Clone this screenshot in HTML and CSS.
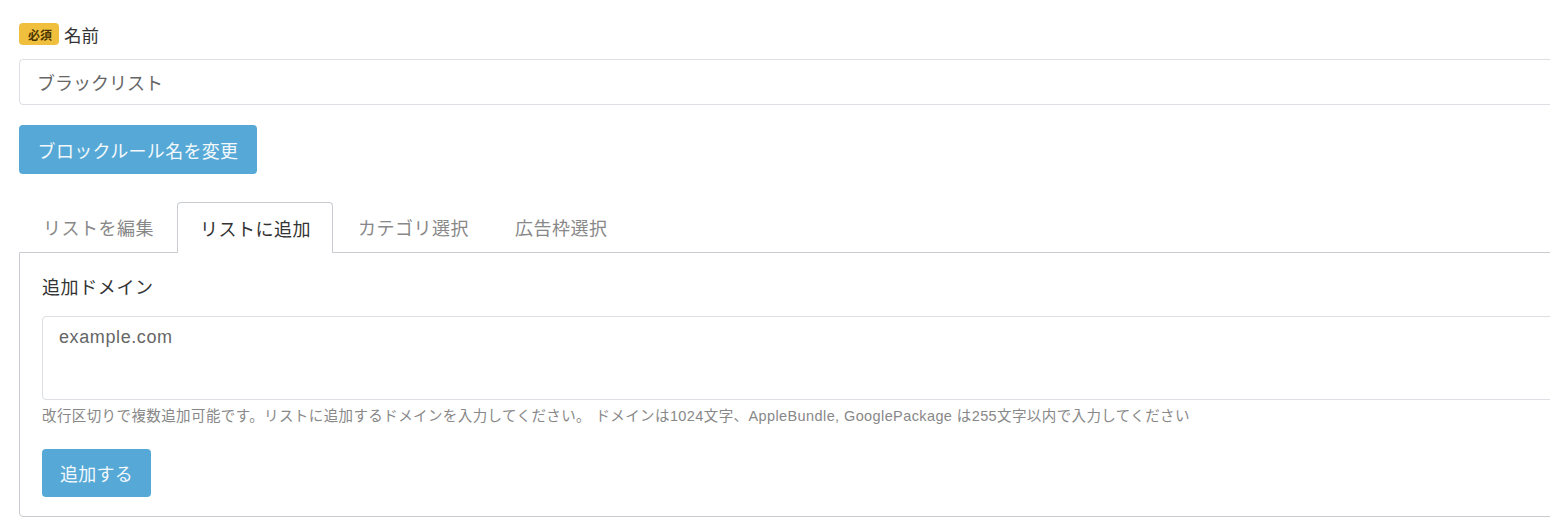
FILE: index.html
```html
<!DOCTYPE html>
<html lang="ja">
<head>
<meta charset="utf-8">
<title>ブロックルール</title>
<link rel="stylesheet" href="styles.css">
</head>
<body>
<div class="page">
  <div class="field-label">
    <span class="badge">必須</span>
    <span class="label-text">名前</span>
  </div>
  <div class="text-input">ブラックリスト</div>
  <div class="btn btn-rename">ブロックルール名を変更</div>

  <div class="tabs">
    <div class="tab">リストを編集</div>
    <div class="tab active">リストに追加</div>
    <div class="tab">カテゴリ選択</div>
    <div class="tab">広告枠選択</div>
  </div>
  <div class="pane">
    <div class="pane-label">追加ドメイン</div>
    <div class="textarea">example.com</div>
    <div class="help">改行区切りで複数追加可能です。リストに追加するドメインを入力してください。 ドメインは1024文字、AppleBundle, GooglePackage は255文字以内で入力してください</div>
    <div class="btn btn-add">追加する</div>
  </div>
</div>
</body>
</html>
```
FILE: styles.css
```css
html, body {
  margin: 0;
  padding: 0;
  overflow: hidden;
  background: #fff;
}
body {
  font-family: "Liberation Sans", "Noto Sans CJK JP", sans-serif;
  color: #333;
}
.page {
  width: 1560px;
  padding: 23px 0 0 19px;
}
.field-label {
  display: flex;
  align-items: center;
  gap: 5px;
  height: 22px;
}
.badge {
  display: inline-flex;
  align-items: center;
  height: 22px;
  padding: 0 7px 0 9px;
  background: #f1bf3e;
  color: #4a3600;
  font-size: 12px;
  font-weight: bold;
  border-radius: 4px;
  box-sizing: border-box;
}
.label-text {
  font-size: 17.5px;
  color: #333;
}
.text-input {
  margin-top: 14px;
  height: 46px;
  box-sizing: border-box;
  border: 1px solid #dcdfe3;
  border-radius: 4px;
  padding: 0 17px;
  display: flex;
  align-items: center;
  font-size: 18px;
  color: #666;
}
.btn {
  display: inline-flex;
  align-items: center;
  justify-content: center;
  background: #56a8d6;
  color: #f2f8fc;
  font-size: 18px;
  letter-spacing: 0.3px;
  border-radius: 4px;
  box-sizing: border-box;
}
.btn-rename {
  margin-top: 20px;
  height: 49px;
  width: 238px;
}
.tabs {
  display: flex;
  margin-top: 27px;
  padding-left: 1px;
  height: 51px;
  align-items: stretch;
}
.tab {
  display: flex;
  align-items: center;
  padding: 0 20px 0 22px;
  margin-right: 2px;
  font-size: 18px;
  letter-spacing: 0.5px;
  color: #888;
  border: 1px solid transparent;
  border-bottom: none;
  border-radius: 4px 4px 0 0;
}
.tab.active {
  color: #333;
  border-color: #c9ccd0;
  background: #fff;
  position: relative;
  top: 1px;
  padding-right: 21px;
}
.pane {
  border: 1px solid #c9ccd0;
  border-radius: 0 0 4px 4px;
  padding: 24px 0 21px 22px;
  height: 265px;
  box-sizing: border-box;
}
.pane-label {
  font-size: 18px;
  letter-spacing: 0.6px;
  color: #333;
  line-height: 22px;
}
.textarea {
  margin-top: 17px;
  height: 84px;
  box-sizing: border-box;
  border: 1px solid #dcdfe3;
  border-radius: 4px;
  padding: 10px 16px;
  font-size: 18px;
  letter-spacing: 0.6px;
  color: #666;
}
.help {
  margin-top: 7px;
  font-size: 14.5px;
  letter-spacing: 0.4px;
  color: #888;
  line-height: 18px;
  white-space: nowrap;
}
.btn-add {
  margin-top: 24px;
  height: 48px;
  width: 109px;
}
```
